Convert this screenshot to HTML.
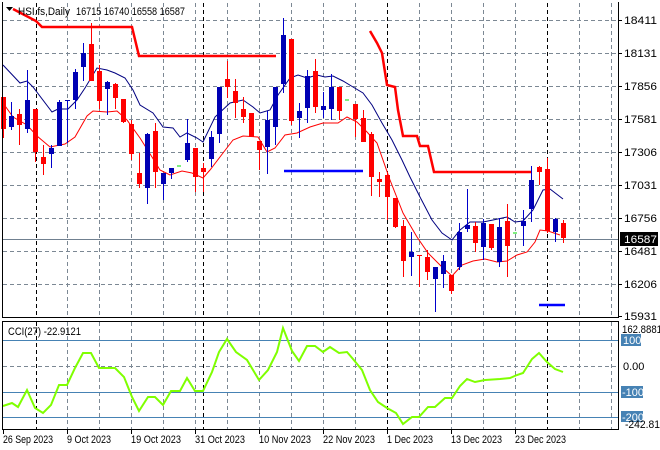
<!DOCTYPE html>
<html><head><meta charset="utf-8"><style>
html,body{margin:0;padding:0;background:#fff;width:660px;height:450px;overflow:hidden}
svg{display:block}
text{font-family:"Liberation Sans",sans-serif;font-size:11px;fill:#000}
</style></head><body>
<svg width="660" height="450" viewBox="0 0 660 450" xmlns="http://www.w3.org/2000/svg">
<rect width="660" height="450" fill="#fff"/>
<g stroke="#7c8894" stroke-dasharray="4,3" stroke-width="1">
<path d="M3 20.5H618M3 53.5H618M3 86.5H618M3 119.5H618M3 152.5H618M3 185.5H618M3 218.5H618M3 251.5H618M3 284.5H618"/>
<path d="M67.5 3V317M99.5 3V317M131.5 3V317M163.5 3V317M195.5 3V317M227.5 3V317M259.5 3V317M291.5 3V317M323.5 3V317M355.5 3V317M419.5 3V317M451.5 3V317M483.5 3V317M515.5 3V317M579.5 3V317M611.5 3V317"/>
<path d="M67.5 322V429M99.5 322V429M131.5 322V429M163.5 322V429M195.5 322V429M227.5 322V429M259.5 322V429M291.5 322V429M323.5 322V429M355.5 322V429M419.5 322V429M451.5 322V429M483.5 322V429M515.5 322V429M579.5 322V429M611.5 322V429"/>
<path d="M3 366.5H618"/>
</g>
<g stroke="#000" stroke-dasharray="4,3" stroke-width="1">
<path d="M36.5 3V317M203.5 3V317M387.5 3V317M547.5 3V317M36.5 322V429M203.5 322V429M387.5 322V429M547.5 322V429"/>
</g>
<path d="M3 239.5H618" stroke="#708090" stroke-width="1"/>
<g fill="none" stroke="#ff0000" stroke-width="2.5">
<path d="M13 9L36 21L42 27H132L139 56H276"/>
<path d="M370 31L377 43L382 53L387 85L395 87L398 110L403 136H417L420 146H428L434 172H532"/>
</g>
<path d="M284 171H363M539 305H565" stroke="#0000ff" stroke-width="2.5"/>
<polyline fill="none" stroke="#000080" stroke-width="1" points="3,65 20,83 27,81 33,87 52,112 58,109 68,109 77,100 85,88 97,68 107,70 115,73 125,78 133,90 140,105 153,113 163,127 173,128 180,137 187,133 197,138 203,142 215,117 230,103 243,100 253,107 260,113 270,110 278,95 290,78 298,75 307,78 317,75 325,77 333,76 343,81 353,87 363,93 372,105 382,123 392,140 402,160 410,177 420,197 432,220 442,233 452,240 460,230 470,222 483,222 493,220 507,217 515,222 523,221 533,210 543,190 550,189 563,199"/>
<polyline fill="none" stroke="#ff0000" stroke-width="1" points="3,103 13,117 27,125 37,136 50,147 65,144 75,137 87,116 93,111 107,112 117,111 127,120 140,138 152,157 160,170 170,175 182,171 192,173 203,178 210,170 223,153 233,140 243,136 258,137 267,152 275,148 285,135 297,133 310,127 323,123 338,123 347,117 357,122 367,132 377,143 390,180 403,213 417,237 428,253 442,267 452,276 462,265 473,261 485,259 497,262 507,261 517,255 527,252 535,242 540,230 548,231 560,235"/>
<g stroke-width="1">
<g stroke="#ff0000" fill="#ff0000">
<path d="M3.5 97V138M19.5 109V145M35.5 109V162M43.5 145V175M91.5 23V81M99.5 65V109M115.5 83V109M123.5 99V123M131.5 120V160M139.5 153V188M155.5 123V188M195.5 148V192M203.5 163V192M227.5 61V98M235.5 79V118M243.5 97V123M251.5 113V137M259.5 141V170M291.5 39V125M315.5 59V113M339.5 87V120M355.5 104V137M363.5 110V142M371.5 132V196M379.5 172V197M387.5 172V220M395.5 198V228M403.5 220V277M419.5 255V287M427.5 250V280M451.5 275V294M475.5 222V252M491.5 224V250M507.5 204V277M539.5 166V185M547.5 158V233M563.5 220V243"/>
<g stroke="none">
<rect x="1" y="97" width="5" height="32"/><rect x="17" y="114" width="5" height="11"/><rect x="33" y="109" width="5" height="43"/><rect x="41" y="157" width="5" height="7"/><rect x="89" y="44" width="5" height="37"/><rect x="97" y="71" width="5" height="30"/><rect x="113" y="84" width="5" height="14"/><rect x="121" y="99" width="5" height="23"/><rect x="129" y="124" width="5" height="30"/><rect x="137" y="173" width="5" height="11"/><rect x="153" y="131" width="5" height="41"/><rect x="193" y="148" width="5" height="29"/><rect x="201" y="168" width="5" height="4"/><rect x="225" y="79" width="5" height="8"/><rect x="233" y="91" width="5" height="12"/><rect x="241" y="109" width="5" height="8"/><rect x="249" y="113" width="5" height="24"/><rect x="257" y="141" width="5" height="9"/><rect x="289" y="39" width="5" height="82"/><rect x="313" y="71" width="5" height="36"/><rect x="337" y="87" width="5" height="24"/><rect x="353" y="104" width="5" height="15"/><rect x="361" y="118" width="5" height="24"/><rect x="369" y="134" width="5" height="43"/><rect x="377" y="179" width="5" height="3"/><rect x="385" y="175" width="5" height="22"/><rect x="393" y="198" width="5" height="29"/><rect x="401" y="226" width="5" height="35"/><rect x="417" y="255" width="5" height="1"/><rect x="425" y="257" width="5" height="15"/><rect x="449" y="275" width="5" height="16"/><rect x="473" y="226" width="5" height="17"/><rect x="489" y="224" width="5" height="24"/><rect x="505" y="221" width="5" height="25"/><rect x="537" y="167" width="5" height="5"/><rect x="545" y="169" width="5" height="62"/><rect x="561" y="223" width="5" height="15"/>
</g></g>
<g stroke="#0000cc" fill="#0000b4">
<path d="M11.5 102V130M27.5 70V133M51.5 145V168M59.5 100V146M67.5 100V143M75.5 69V109M83.5 43V81M107.5 81V115M147.5 133V204M163.5 173V200M171.5 168V179M187.5 119V162M211.5 131V167M219.5 87V143M267.5 111V174M275.5 87V145M283.5 18V93M299.5 103V138M307.5 70V123M323.5 92V118M331.5 74V120M411.5 232V276M435.5 267V312M443.5 255V288M459.5 223V270M467.5 189V232M483.5 219V260M499.5 218V267M523.5 210V246M531.5 166V222M555.5 218V242"/>
<g stroke="none">
<rect x="9" y="116" width="5" height="11"/><rect x="25" y="100" width="5" height="29"/><rect x="49" y="148" width="5" height="6"/><rect x="57" y="102" width="5" height="44"/><rect x="65" y="100" width="5" height="1"/><rect x="73" y="72" width="5" height="28"/><rect x="81" y="53" width="5" height="14"/><rect x="105" y="82" width="5" height="7"/><rect x="145" y="134" width="5" height="54"/><rect x="161" y="173" width="5" height="11"/><rect x="169" y="168" width="5" height="5"/><rect x="185" y="143" width="5" height="17"/><rect x="209" y="137" width="5" height="22"/><rect x="217" y="87" width="5" height="47"/><rect x="265" y="120" width="5" height="27"/><rect x="273" y="87" width="5" height="40"/><rect x="281" y="35" width="5" height="49"/><rect x="297" y="111" width="5" height="7"/><rect x="305" y="76" width="5" height="32"/><rect x="321" y="106" width="5" height="4"/><rect x="329" y="87" width="5" height="22"/><rect x="409" y="252" width="5" height="5"/><rect x="433" y="267" width="5" height="12"/><rect x="441" y="261" width="5" height="13"/><rect x="457" y="232" width="5" height="35"/><rect x="465" y="225" width="5" height="4"/><rect x="481" y="223" width="5" height="24"/><rect x="497" y="227" width="5" height="35"/><rect x="521" y="221" width="5" height="5"/><rect x="529" y="180" width="5" height="29"/><rect x="553" y="219" width="5" height="13"/>
</g></g>
<path d="M177 166H181M345 100H349M513 233H517" stroke="#00dd00" stroke-width="1"/>
</g>
<path d="M3 340.5H618M3 392.5H618M3 417.5H618" stroke="#4682b4" stroke-width="1"/>
<polyline fill="none" stroke="#7fff00" stroke-width="2" points="3,406 12,403 18,407 27,390 35,408 43,413 51,405 59,385 67,385 75,368 83,353 91,353 99,368 115,368 124,377 132,397 139,411 148,397 155,397 163,405 171,391 180,391 187,378 195,391 203,391 212,372 219,352 227,339 236,352 247,360 259,380 268,370 277,352 283,328 292,351 299,361 307,346 315,346 323,352 330,347 339,353 347,352 353,359 362,370 370,390 378,402 387,408 396,413 403,424 412,417 419,417 428,407 435,407 445,398 452,398 460,386 467,379 475,382 485,380 500,379 510,378 517,375 523,373 532,359 539,353 547,362 555,369 563,372"/>
<g fill="none" stroke="#000" stroke-width="1">
<path d="M2.5 2V317.5H618.5V2"/>
<path d="M2.5 321.5H618.5V429.5H2.5Z"/>
</g>
<g stroke="#000"><path d="M618 20.5h4M618 53.5h4M618 86.5h4M618 119.5h4M618 152.5h4M618 185.5h4M618 218.5h4M618 251.5h4M618 284.5h4M618 316.5h4M3.5 430v4M67.5 430v4M131.5 430v4M195.5 430v4M259.5 430v4M323.5 430v4M387.5 430v4M451.5 430v4M515.5 430v4"/></g>
<g>
<text x="624" y="24" textLength="33" lengthAdjust="spacingAndGlyphs">18411</text><text x="624" y="57" textLength="33" lengthAdjust="spacingAndGlyphs">18131</text><text x="624" y="90" textLength="33" lengthAdjust="spacingAndGlyphs">17856</text><text x="624" y="123" textLength="33" lengthAdjust="spacingAndGlyphs">17581</text><text x="624" y="156" textLength="33" lengthAdjust="spacingAndGlyphs">17306</text><text x="624" y="189" textLength="33" lengthAdjust="spacingAndGlyphs">17031</text><text x="624" y="222" textLength="33" lengthAdjust="spacingAndGlyphs">16756</text><text x="624" y="255" textLength="33" lengthAdjust="spacingAndGlyphs">16481</text><text x="624" y="288" textLength="33" lengthAdjust="spacingAndGlyphs">16206</text><text x="624" y="320" textLength="33" lengthAdjust="spacingAndGlyphs">15931</text>
</g>
<rect x="620" y="232" width="38" height="14" fill="#000"/>
<text x="624" y="243" style="fill:#fff" textLength="33" lengthAdjust="spacingAndGlyphs">16587</text>
<text x="622" y="333" textLength="40" lengthAdjust="spacingAndGlyphs">162.8881</text>
<rect x="621" y="334" width="20" height="12" fill="#4682b4"/><text x="623" y="344" style="fill:#fff">100</text>
<text x="623" y="370">0.00</text>
<rect x="621" y="386" width="22" height="12" fill="#4682b4"/><text x="622" y="396" style="fill:#fff">-100</text>
<rect x="621" y="411" width="22" height="11" fill="#4682b4"/><text x="622" y="421" style="fill:#fff">-200</text>
<text x="625" y="428" textLength="35" lengthAdjust="spacingAndGlyphs">-242.81</text>
<text x="8" y="335" textLength="73" lengthAdjust="spacingAndGlyphs">CCI(27) -22.9121</text>
<g>
<text x="3" y="443" textLength="50" lengthAdjust="spacingAndGlyphs">26 Sep 2023</text><text x="67" y="443" textLength="44" lengthAdjust="spacingAndGlyphs">9 Oct 2023</text><text x="131" y="443" textLength="50" lengthAdjust="spacingAndGlyphs">19 Oct 2023</text><text x="195" y="443" textLength="50" lengthAdjust="spacingAndGlyphs">31 Oct 2023</text><text x="259" y="443" textLength="52" lengthAdjust="spacingAndGlyphs">10 Nov 2023</text><text x="323" y="443" textLength="52" lengthAdjust="spacingAndGlyphs">22 Nov 2023</text><text x="387" y="443" textLength="46" lengthAdjust="spacingAndGlyphs">1 Dec 2023</text><text x="451" y="443" textLength="51" lengthAdjust="spacingAndGlyphs">13 Dec 2023</text><text x="515" y="443" textLength="51" lengthAdjust="spacingAndGlyphs">23 Dec 2023</text>
</g>
<path d="M6 7H13L9.5 11Z" fill="#000"/>
<text x="18" y="15" textLength="52" lengthAdjust="spacingAndGlyphs">HSI.fs,Daily</text>
<text x="76" y="15" textLength="109" lengthAdjust="spacingAndGlyphs">16715 16740 16558 16587</text>
</svg>
</body></html>
